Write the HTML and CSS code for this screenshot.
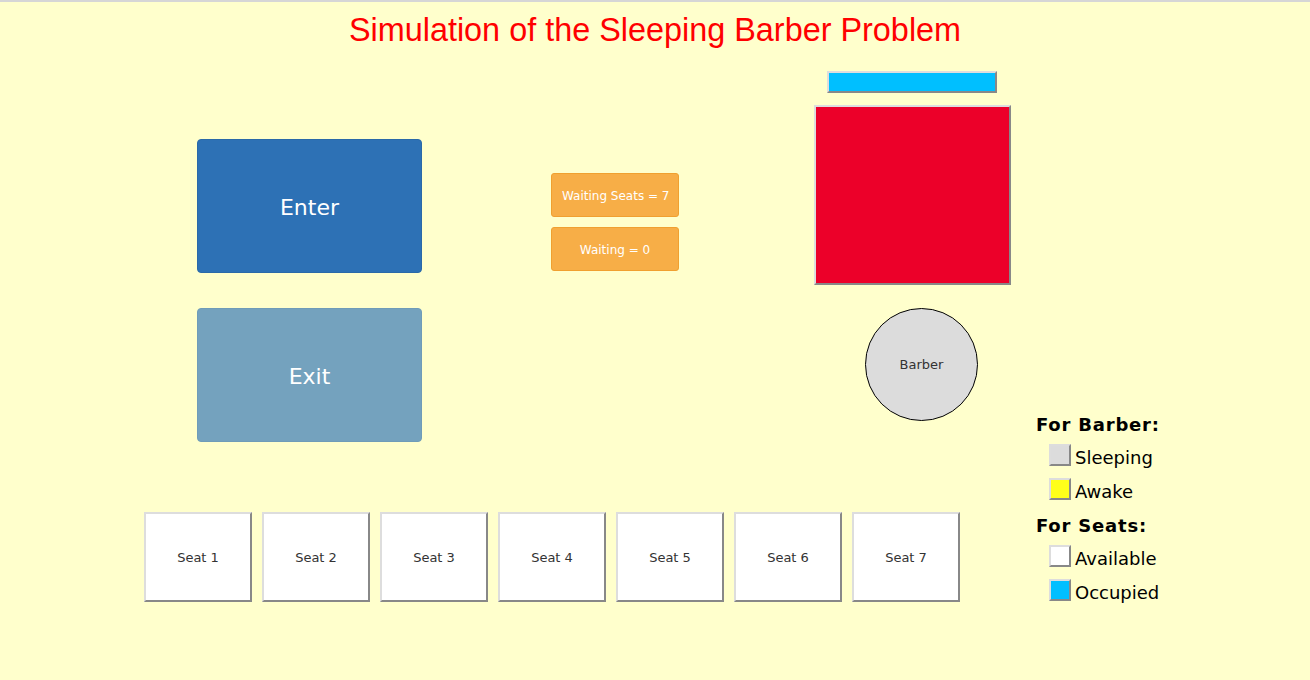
FILE: index.html
```html
<!doctype html>
<html>

<head>
    <meta charset="UTF-8">
    <title>Sleeping Barber</title>
    <link rel="stylesheet" href="styles.css">
</head>

<body>
    <h1 class="title">Simulation of the Sleeping Barber Problem</h1>
    <div class="stage">
        <div class="shop">
            <div class="top-row">
                <div class="controls">
                    <div class="btn btn-enter">Enter</div>
                    <div class="btn btn-exit">Exit</div>
                </div>
                <div class="counters">
                    <div class="counter">Waiting Seats = 7</div>
                    <div class="counter">Waiting = 0</div>
                </div>
                <div class="barber-area">
                    <div class="chair-bar"></div>
                    <div class="barber-room"></div>
                    <div class="barber">Barber</div>
                </div>
            </div>
            <div class="seats">
                <div class="seat">Seat 1</div>
                <div class="seat">Seat 2</div>
                <div class="seat">Seat 3</div>
                <div class="seat">Seat 4</div>
                <div class="seat">Seat 5</div>
                <div class="seat">Seat 6</div>
                <div class="seat">Seat 7</div>
            </div>
        </div>
        <div class="legend">
            <h3>For Barber:</h3>
            <div class="legend-item"><span class="swatch sleeping"></span><span>Sleeping</span></div>
            <div class="legend-item"><span class="swatch awake"></span><span>Awake</span></div>
            <h3>For Seats:</h3>
            <div class="legend-item"><span class="swatch available"></span><span>Available</span></div>
            <div class="legend-item"><span class="swatch occupied"></span><span>Occupied</span></div>
        </div>
    </div>
</body>

</html>
```

FILE: styles.css
```css
* {
    margin: 0;
    padding: 0;
    box-sizing: border-box;
}

html,
body {
    width: 100%;
    height: 100%;
    overflow: hidden;
}

body {
    background-color: #ffffcc;
    border-top: 2px solid #d6d6d6;
    font-family: "DejaVu Sans", Verdana, sans-serif;
}

.title {
    margin-top: 10px;
    height: 37px;
    font: normal 32.4px/37px "Liberation Sans", Arial, sans-serif;
    color: #ff0000;
    text-align: center;
}

.stage {
    display: flex;
    padding-left: 144px;
}

.shop {
    width: 867px;
}

.top-row {
    display: flex;
    align-items: flex-start;
}

/* enter / exit */
.controls {
    margin: 90px 0 0 53px;
    display: flex;
    flex-direction: column;
    gap: 35px;
}

.btn {
    width: 225px;
    height: 134px;
    padding-top: 2px;
    border-radius: 4px;
    color: #fff;
    font-size: 22px;
    display: flex;
    align-items: center;
    justify-content: center;
    cursor: pointer;
}

.btn-enter {
    background-color: #2d71b5;
    border: 1px solid #2a69a8;
}

.btn-exit {
    background-color: #74a2be;
    border: 1px solid #6f9cb8;
}

/* counters */
.counters {
    margin: 124px 0 0 129px;
    display: flex;
    flex-direction: column;
    gap: 10px;
}

.counter {
    width: 128px;
    height: 44px;
    padding: 1px 10px 0;
    background-color: #f7ae47;
    border: 1px solid #f0a030;
    border-radius: 3px;
    color: #fff;
    font-size: 12px;
    line-height: 42px;
    text-align: center;
    white-space: nowrap;
}

/* barber */
.barber-area {
    margin: 22px 0 0 135px;
    width: 197px;
}

.chair-bar {
    width: 170px;
    height: 22px;
    margin-left: 13px;
    background-color: #00bfff;
    border: 2px solid;
    border-color: #ddd #888 #888 #ddd;
}

.barber-room {
    margin-top: 12px;
    width: 197px;
    height: 180px;
    background-color: #ec0029;
    border: 2px solid;
    border-color: #ddd #888 #888 #ddd;
}

.barber {
    margin: 23px 0 0 51px;
    width: 113px;
    height: 113px;
    border-radius: 50%;
    border: 1px solid #000;
    background-color: #dcdcdc;
    color: #333;
    font-size: 13px;
    display: flex;
    align-items: center;
    justify-content: center;
}

/* seats */
.seats {
    margin-top: 70px;
    display: flex;
    gap: 10px;
}

.seat {
    width: 108px;
    height: 90px;
    background-color: #fff;
    border: 2px solid;
    border-color: #ddd #888 #888 #ddd;
    color: #333;
    font-size: 13px;
    display: flex;
    align-items: center;
    justify-content: center;
}

/* legend */
.legend {
    margin: 365px 0 0 25px;
    color: #000;
}

.legend h3 {
    font-size: 18px;
    font-weight: bold;
    letter-spacing: 0.8px;
    line-height: 22px;
}

.legend h3+h3,
.legend-item+h3 {
    margin-top: 15px;
}

.legend-item {
    display: flex;
    align-items: flex-end;
    gap: 4px;
    margin: 8px 0 0 13px;
    font-size: 18px;
    line-height: 17px;
}

.legend-item+.legend-item {
    margin-top: 12px;
}

.swatch {
    width: 22px;
    height: 22px;
    border: 2px solid;
    border-color: #ddd #888 #888 #ddd;
}

.sleeping {
    background-color: #dcdcdc;
}

.awake {
    background-color: #ffff1a;
}

.available {
    background-color: #fff;
}

.occupied {
    background-color: #00bfff;
}
```
